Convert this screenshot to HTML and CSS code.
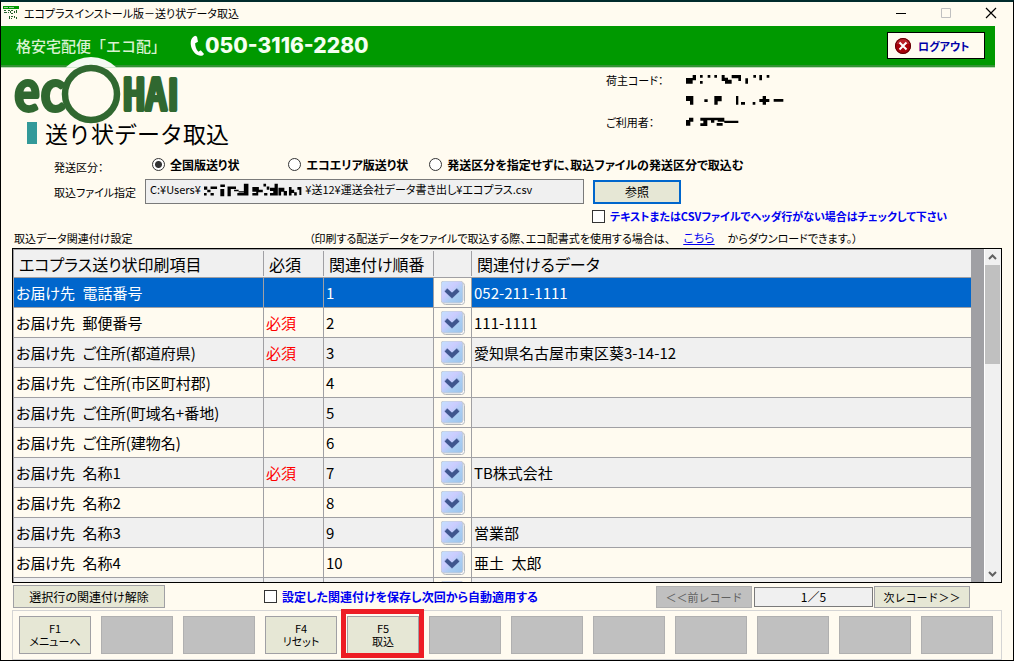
FILE: index.html
```html
<!DOCTYPE html>
<html lang="ja">
<head>
<meta charset="utf-8">
<title>エコプラスインストール版－送り状データ取込</title>
<link rel="stylesheet" href="styles.css">
</head>
<body>
<svg class="defs" width="0" height="0" aria-hidden="true">
  <defs>
    <linearGradient id="pick-fill" x1="0" y1="0" x2="1" y2="1">
      <stop offset="0" stop-color="#c2e2ff"/><stop offset="0.4" stop-color="#ccccff"/><stop offset="0.65" stop-color="#a9cdf2"/><stop offset="1" stop-color="#9cc4ec"/>
    </linearGradient>
    <symbol id="pick" viewBox="0 0 24 24">
      <rect x="1.5" y="1.5" width="22" height="22" rx="3" fill="#fff" stroke="#b4b8bc"/>
      <rect x="0" y="0" width="22" height="22" rx="3" fill="url(#pick-fill)" stroke="#c8ccd4" stroke-width="1"/>
      <path d="M3 10 6 7 11 12 16 7 19 10 11 18z" fill="#7f8fc4" opacity=".5"/>
      <path d="M5 9 11 14.500 17 9" fill="none" stroke="#3f568e" stroke-width="4"/>
    </symbol>
  </defs>
</svg>
<div class="window">
  <header class="titlebar">
    <svg class="app-icon" viewBox="0 0 16 14" aria-hidden="true">
      <path fill="#090" d="M0 0h16v3H0z"/>
      <path fill="#9fcf9f" d="M1 1h4v1H1zM6 1h5v1H6z"/>
      <path fill="#255f2b" d="M1 4h2v1H1zM1 6h3v1H1zM5 4h2v1H5zM5 6h1v1H5zM8 4h2v1H8zM7 5h1v2H7zM11 5h1v2h-1zM13 4h1v3h-1zM8 7h2v1H8zM6 10h1v3H6zM8 10h2v1H8zM8 12h1v1H8zM11 10h1v2h-1zM13 11h1v2h-1z"/>
    </svg>
    <span class="title">エコプラスインストール版－送り状データ取込</span>
    <div class="window-buttons">
      <button class="win-btn" type="button" aria-label="最小化"><svg viewBox="0 0 12 12"><path d="M1 6.500h10" stroke="#000"/></svg></button>
      <button class="win-btn" type="button" aria-label="最大化" disabled><svg viewBox="0 0 12 12"><path d="M1.500 1.500h9v9h-9z" fill="none" stroke="#c0c0c0"/></svg></button>
      <button class="win-btn" type="button" aria-label="閉じる"><svg viewBox="0 0 12 12"><path d="M1 1l10 10M11 1L1 11" stroke="#000" stroke-width="1.200"/></svg></button>
    </div>
  </header>

  <div class="banner">
    <span class="tagline">格安宅配便「エコ配」</span>
    <span class="phone">
      <svg viewBox="0 0 16 24" aria-hidden="true"><path fill="#fff" d="M5.500 1 C0 3 0 10 2 15 C4.500 20 8.500 23.500 13.500 22 L15 20.500 11.500 16.500 9 18 C6.500 16 5.500 12 5.500 9 L8.500 7.500 7.500 2z"/></svg>
      050-3116-2280
    </span>
    <button class="logout" type="button">
      <svg viewBox="0 0 18 18" aria-hidden="true"><circle cx="9" cy="9" r="8" fill="#a80008"/><path d="M2 7a7.200 7.200 0 0 1 14 0z" fill="#c84048" opacity=".5"/><circle cx="9" cy="9" r="7.500" fill="none" stroke="#5c0004"/><path d="M5.500 5.500l7 7M12.500 5.500l-7 7" stroke="#fff" stroke-width="2"/></svg>
      ログアウト
    </button>
  </div>

  <section class="intro">
    <div class="brand">
      <svg class="logo" viewBox="0 0 190 66" role="img" aria-label="ecoHAI">
        <path d="M53.500 9.500 A36 36 0 0 1 104.500 9.500z" fill="#f4faf2"/>
        <text class="logo-text logo-ec" x="2" y="52">ec</text>
        <circle cx="79" cy="36" r="26" fill="#fffbf0" stroke="#306830" stroke-width="6.500"/>
        <text class="logo-text logo-hai" x="111" y="52">HA<tspan class="logo-i">I</tspan></text>
      </svg>
      <h1>送り状データ取込</h1>
    </div>
    <dl class="account">
      <dt>荷主コード：</dt>
      <dd><svg viewBox="0 0 300 30" aria-hidden="true"><path d="M0 9h20V0h10v16H20v10H0zM42 0h8v8h-8zM42 18h8v8h-8zM65 0h8v8h-8zM85 0h8v8h-8zM107 0h9v8h10v6h11v12h-20v-8h-10zM137 0h28v18h-8v-8h-20zM178 10h8v16h-8zM202 0h8v8h-8zM220 0h8v16h-8zM242 0h8v8h-8z"/></svg></dd>
      <dd><svg viewBox="0 0 300 30" aria-hidden="true"><path d="M0 0h22v26H12V15H0zM55 10h10v8H55zM85 0h22v16H95v10H85zM150 0h7v26h-7zM165 18h12v8h-12zM200 18h8v8h-8zM220 9h10V0h10v9h10v9h-10v8h-10v-8h-10zM263 9h29v8h-29z"/></svg></dd>
      <dt>ご利用者：</dt>
      <dd><svg viewBox="0 0 300 30" aria-hidden="true"><path d="M0 9h9V2h13v12h-9v12H0zM43 2h72v9h42v7h-42v-4H95v-4H85v7H75v-7H64v17H43v-8h9v-8h-9zM92 18h18v8H92z"/></svg></dd>
    </dl>
  </section>

  <form class="import">
    <div class="form-row" role="radiogroup" aria-labelledby="kind-label">
      <span class="form-label kind" id="kind-label">発送区分：</span>
      <label class="choice"><input type="radio" name="kind" checked>全国版送り状</label>
      <label class="choice"><input type="radio" name="kind">エコエリア版送り状</label>
      <label class="choice"><input type="radio" name="kind">発送区分を指定せずに、取込ファイルの発送区分で取込む</label>
    </div>
    <div class="form-row">
      <label class="form-label" for="path">取込ファイル指定</label>
      <span class="path-field">
        <input id="path" type="text" readonly value="C:¥Users¥　　　　　　　　　&ensp;¥送12¥運送会社データ書き出し¥エコプラス.csv">
        <svg class="path-mask" viewBox="0 0 300 42" aria-hidden="true"><path d="M0 10h10v10H0zM10 20h10v8H10zM0 30h8v8H0zM20 30h10v8H20zM20 10h20v8H20zM50 4h14v8H50zM50 18h12v22H50zM72 10h26v8H82v22H72zM92 20h14v9h16V2h14v36h-34v-8h20v-5H92zM148 12h20v8h12v8h-14v10h-18v-8h12v-4h-12zM182 2h8v8h-8zM192 10h8v10h-8zM184 30h10v8h-10zM202 14h14V2h10v36h-24v-8h10v-6h-10zM228 14h18v10h8v14h-10v-12h-8v12h-8zM260 12h8v8h8v8h8v10h-8v-8h-8v8h-8zM286 12h12v24h-6V20h-6z"/></svg>
      </span>
      <button class="browse" type="button">参照</button>
    </div>
    <label class="check header-check"><input type="checkbox">テキストまたはCSVファイルでヘッダ行がない場合はチェックして下さい</label>
    <div class="caption">
      <span>取込データ関連付け設定</span>
      <span class="hint">（印刷する配送データをファイルで取込する際、エコ配書式を使用する場合は、<a href="#">こちら</a>からダウンロードできます。）</span>
    </div>
  </form>

  <section class="grid">
    <div class="grid-view">
      <table>
        <colgroup><col class="c-item"><col class="c-req"><col class="c-order"><col class="c-pick"><col></colgroup>
        <thead>
          <tr><th>エコプラス送り状印刷項目</th><th>必須</th><th>関連付け順番</th><th></th><th>関連付けるデータ</th></tr>
        </thead>
        <tbody>
          <tr class="selected"><td>お届け先&ensp;電話番号</td><td></td><td>1</td><td><button class="pick" type="button" aria-label="選択"><svg><use href="#pick"/></svg></button></td><td>052-211-1111</td></tr>
          <tr><td>お届け先&ensp;郵便番号</td><td>必須</td><td>2</td><td><button class="pick" type="button" aria-label="選択"><svg><use href="#pick"/></svg></button></td><td>111-1111</td></tr>
          <tr><td>お届け先&ensp;ご住所(都道府県)</td><td>必須</td><td>3</td><td><button class="pick" type="button" aria-label="選択"><svg><use href="#pick"/></svg></button></td><td>愛知県名古屋市東区葵3-14-12</td></tr>
          <tr><td>お届け先&ensp;ご住所(市区町村郡)</td><td></td><td>4</td><td><button class="pick" type="button" aria-label="選択"><svg><use href="#pick"/></svg></button></td><td></td></tr>
          <tr><td>お届け先&ensp;ご住所(町域名+番地)</td><td></td><td>5</td><td><button class="pick" type="button" aria-label="選択"><svg><use href="#pick"/></svg></button></td><td></td></tr>
          <tr><td>お届け先&ensp;ご住所(建物名)</td><td></td><td>6</td><td><button class="pick" type="button" aria-label="選択"><svg><use href="#pick"/></svg></button></td><td></td></tr>
          <tr><td>お届け先&ensp;名称1</td><td>必須</td><td>7</td><td><button class="pick" type="button" aria-label="選択"><svg><use href="#pick"/></svg></button></td><td>TB株式会社</td></tr>
          <tr><td>お届け先&ensp;名称2</td><td></td><td>8</td><td><button class="pick" type="button" aria-label="選択"><svg><use href="#pick"/></svg></button></td><td></td></tr>
          <tr><td>お届け先&ensp;名称3</td><td></td><td>9</td><td><button class="pick" type="button" aria-label="選択"><svg><use href="#pick"/></svg></button></td><td>営業部</td></tr>
          <tr><td>お届け先&ensp;名称4</td><td></td><td>10</td><td><button class="pick" type="button" aria-label="選択"><svg><use href="#pick"/></svg></button></td><td>亜土&ensp;太郎</td></tr>
          <tr><td></td><td></td><td></td><td><button class="pick" type="button" aria-label="選択"><svg><use href="#pick"/></svg></button></td><td></td></tr>
        </tbody>
      </table>
    </div>
    <div class="scrollbar" aria-hidden="true">
      <svg viewBox="0 0 15 16"><path d="M4 10l3.500-3.500L11 10" fill="none" stroke="#606060" stroke-width="2"/></svg>
      <div class="track"><div class="thumb"></div></div>
      <svg viewBox="0 0 15 16"><path d="M4 6l3.500 3.500L11 6" fill="none" stroke="#606060" stroke-width="2"/></svg>
    </div>
  </section>

  <div class="actions">
    <button class="btn release" type="button">選択行の関連付け解除</button>
    <label class="check save-check"><input type="checkbox">設定した関連付けを保存し次回から自動適用する</label>
    <div class="pager">
      <button class="btn step" type="button" disabled>＜＜前レコード</button>
      <input class="position" type="text" readonly value="1／5" aria-label="レコード位置">
      <button class="btn step" type="button">次レコード＞＞</button>
    </div>
  </div>

  <nav class="fkeys" aria-label="ファンクションキー">
    <button class="btn fkey" type="button">F1<br>メニューへ</button>
    <button class="btn fkey" type="button" disabled aria-label="F2"></button>
    <button class="btn fkey" type="button" disabled aria-label="F3"></button>
    <button class="btn fkey" type="button">F4<br>リセット</button>
    <button class="btn fkey marked" type="button">F5<br>取込</button>
    <button class="btn fkey" type="button" disabled aria-label="F6"></button>
    <button class="btn fkey" type="button" disabled aria-label="F7"></button>
    <button class="btn fkey" type="button" disabled aria-label="F8"></button>
    <button class="btn fkey" type="button" disabled aria-label="F9"></button>
    <button class="btn fkey" type="button" disabled aria-label="F10"></button>
    <button class="btn fkey" type="button" disabled aria-label="F11"></button>
    <button class="btn fkey" type="button" disabled aria-label="F12"></button>
  </nav>
</div>
</body>
</html>
```
FILE: styles.css
```css
* { box-sizing: border-box; }

body {
  margin: 0;
  background: #fffbf0;
  color: #000;
  font-family: "Noto Sans CJK JP", sans-serif;
  font-size: 12px;
  line-height: 16px;
  font-feature-settings: "palt";
}

button, input { font: inherit; font-feature-settings: inherit; color: inherit; }
button { padding: 0; }
svg { display: block; }
.defs { position: absolute; }

.window {
  display: flex;
  flex-direction: column;
  height: 100vh;
  min-height: 480px;
  border: 1px solid #000;
  border-top: 2px solid #002b2c;
}

/* Title bar */
.titlebar {
  display: flex;
  align-items: center;
  flex: none;
  height: 24px;
  padding: 0 0 2px 2px;
}
.app-icon { width: 16px; height: 14px; }
.title { margin-left: 5px; font-size: 11px; }
.window-buttons { display: flex; margin-left: auto; }
.win-btn {
  display: grid;
  place-items: center;
  width: 45px;
  height: 22px;
  border: 0;
  background: none;
}
.win-btn svg { width: 12px; height: 12px; }

/* Green banner */
.banner {
  display: flex;
  align-items: center;
  flex: none;
  height: 41px;
  margin-right: 18px;
  padding: 0 10px 0 15px;
  background: #090;
  border-bottom: 2px solid #339233;
  box-shadow: 0 1px 0 #b9dcb4;
}
.tagline {
  width: 174px;
  color: #d8f2d0;
  font-size: 15px;
  font-weight: 500;
  font-feature-settings: normal;
}
.phone {
  display: flex;
  align-items: center;
  color: #f4fff0;
  font-family: Inter, sans-serif;
  font-size: 21px;
  font-weight: 800;
  line-height: 24px;
  font-feature-settings: normal;
}
.phone svg { width: 15px; height: 24px; }
.logout {
  display: flex;
  align-items: center;
  gap: 6px;
  width: 98px;
  height: 27px;
  margin-left: auto;
  padding-left: 6px;
  border: 1px solid #000;
  background: #fffbf0;
  color: #0000a8;
  font-size: 11px;
  font-weight: 700;
}
.logout svg { width: 18px; height: 18px; }

/* Logo, heading and account data */
.intro {
  display: grid;
  grid-template-columns: 605fr 407fr;
  flex: none;
}
.brand { padding-left: 11px; }
.logo {
  position: relative;
  width: 190px;
  height: 66px;
  margin: -9px 0 -3px;
  overflow: visible;
}
.logo-text {
  font-family: "Noto Sans CJK JP", sans-serif;
  font-feature-settings: "hwid";
  font-weight: 400;
  fill: #306830;
  stroke: #306830;
  stroke-width: 4px;
  stroke-linejoin: round;
}
.logo-ec { font-size: 52px; }
.logo-hai { font-size: 44px; }
.logo-i { font-family: "Liberation Sans", sans-serif; font-feature-settings: normal; }
h1 {
  display: flex;
  align-items: center;
  gap: 8px;
  margin: 0 0 0 15px;
  font-size: 23px;
  font-weight: 400;
  line-height: 24px;
  font-feature-settings: normal;
}
h1::before { content: ""; width: 10px; height: 22px; background: #339999; }
.account {
  display: grid;
  grid-template-columns: 80px 1fr;
  grid-auto-rows: 21px;
  align-items: center;
  margin: 2px 0 0;
  font-size: 11px;
}
.account dd { grid-column: 2; margin: 0; }
.account svg { width: 100px; height: 10px; }

/* Import settings */
.import { flex: none; padding: 6px 11px 0 12px; }
.form-row { display: flex; align-items: center; height: 27px; }
.form-label { width: 132px; padding-left: 41px; font-size: 11px; white-space: nowrap; }
.kind { width: 139px; padding-top: 5px; }
.choice, .check {
  display: flex;
  align-items: center;
  gap: 5px;
  font-weight: 700;
  white-space: nowrap;
}
.choice { margin-right: 49px; }
.choice + .choice { margin-right: 21px; }
.choice input {
  appearance: none;
  width: 13px;
  height: 13px;
  margin: 0;
  border: 1px solid #333;
  border-radius: 50%;
  background: #fff;
}
.choice input:checked { background: radial-gradient(circle, #333 3px, #fff 4px); }
.check { color: #0000f0; }
.check input {
  appearance: none;
  width: 13px;
  height: 13px;
  margin: 0;
  border: 1px solid #333;
  background: #fff;
}
.path-field { position: relative; width: 439px; height: 25px; }
.path-field input {
  width: 100%;
  height: 25px;
  padding: 0 4px 6px;
  border: 1px solid #7a7a7a;
  background: #f0f0f0;
  font-size: 11px;
}
.path-mask { position: absolute; left: 59px; top: 4px; width: 98px; height: 14px; }
.browse {
  width: 88px;
  height: 24px;
  margin-left: 9px;
  border: 2px solid #0066cc;
  background: #e6e7d5;
}
.header-check { height: 22px; padding-left: 579px; font-size: 11px; }
.caption { display: flex; align-items: center; height: 21px; font-size: 11px; white-space: nowrap; }
.caption span:first-child { width: 296px; padding-left: 1px; }
.hint a { margin: 0 13px; color: #0000f0; font-size: 12px; }

/* Mapping grid */
.grid {
  display: flex;
  flex: 1;
  min-height: 0;
  margin: 0 11px;
  border: 1px solid #000;
  overflow: hidden;
}
.grid-view {
  flex: 1;
  min-width: 0;
  border-left: 1px solid #a0a0a4;
  border-right: 13px solid #a0a0a4;
  overflow: hidden;
}
table { width: 100%; table-layout: fixed; border-collapse: separate; border-spacing: 0; }
.c-item { width: 250px; }
.c-req { width: 60px; }
.c-order { width: 110px; }
.c-pick { width: 38px; }
th {
  height: 29px;
  padding: 0 5px;
  border-top: 1px solid #a0a0a4;
  border-bottom: 1px solid #a0a0a4;
  background: linear-gradient(#a0a0a4, #a0a0a4) right center / 1px 25px no-repeat #f0f0f0;
  font-size: 16px;
  font-weight: 400;
  line-height: 20px;
  text-align: left;
  white-space: nowrap;
}
td {
  height: 30px;
  padding: 0 2px;
  border-right: 1px solid #a0a0a4;
  border-bottom: 1px solid #a0a0a4;
  font-size: 15px;
  line-height: 20px;
  white-space: nowrap;
}
th:last-child { background: #f0f0f0; }
td:last-child { border-right: 0; }
td:nth-child(2) { color: #f00; }
tbody tr:nth-child(odd) { background: #f0f0f0; }
tbody tr.selected { background: #0066cc; color: #fff; }
td:nth-child(4) { background: #fffbf0; }
.pick {
  display: block;
  width: 24px;
  height: 24px;
  margin: 0 auto;
  border: 0;
  background: none;
}
.pick svg { width: 24px; height: 24px; overflow: visible; }
.scrollbar {
  display: flex;
  flex-direction: column;
  width: 17px;
  padding-right: 1px;
  border-left: 1px solid #fff;
  background: #f0f0f0;
}
.scrollbar svg { flex: none; width: 15px; height: 16px; }
.track { flex: 1; }
.thumb { height: 33%; background: #c0c0c0; }

/* Bottom controls */
.btn { border: 1px solid #a0a0a4; background: #e6e7d5; }
.btn:disabled { border-color: #b0b0b0; background: #c0c0c0; color: #606060; }
.actions {
  display: flex;
  align-items: center;
  flex: none;
  height: 27px;
  margin: 0 43px 0 12px;
}
.release { width: 152px; height: 23px; }
.save-check { margin-left: 99px; }
.pager { display: flex; align-items: center; margin-left: auto; }
.step { width: 96px; height: 22px; font-size: 11px; font-feature-settings: normal; }
.position {
  width: 119px;
  height: 20px;
  margin: 0 1px 0 2px;
  padding: 0;
  border: 1px solid #7a7a7a;
  background: #f0f0f0;
  text-align: center;
}
.fkeys {
  display: flex;
  justify-content: space-between;
  flex: none;
  margin: 0 11px;
  padding: 5px 8px 5px 6px;
  border: 1px solid #d4d4d4;
}
.fkey { position: relative; width: 72px; height: 38px; font-size: 11px; line-height: 13px; }
.marked::after {
  content: "";
  position: absolute;
  inset: -8px -6px -5px -7px;
  border: 5px solid #ed1c24;
}
```
